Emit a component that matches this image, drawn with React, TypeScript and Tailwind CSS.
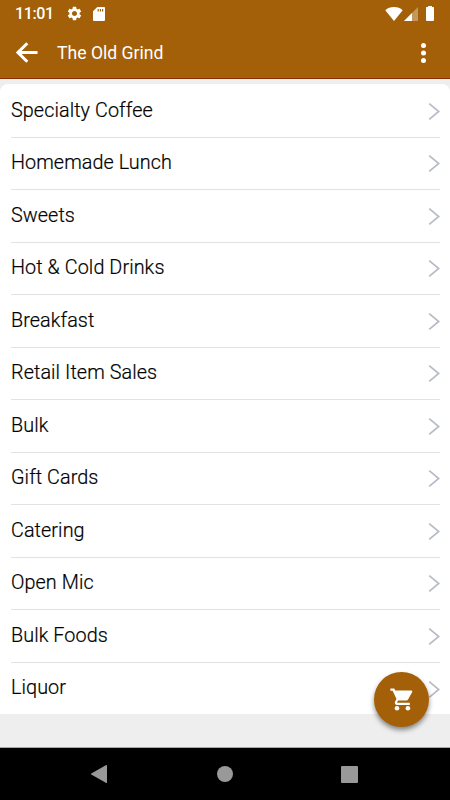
import React from 'react';
import { MdSettings } from 'react-icons/md';

const CATEGORIES = [
  'Specialty Coffee',
  'Homemade Lunch',
  'Sweets',
  'Hot & Cold Drinks',
  'Breakfast',
  'Retail Item Sales',
  'Bulk',
  'Gift Cards',
  'Catering',
  'Open Mic',
  'Bulk Foods',
  'Liquor',
];

const StatusBar: React.FC = () => (
  <div className="flex h-[27px] items-center pr-[16px] pl-[15px] text-white">
    <span className="w-[39px] pt-px text-[16px] leading-none font-medium tracking-[-0.35px]">11:01</span>
    <MdSettings className="ml-[12px] size-[17px]" />
    <svg className="ml-[9.5px] h-[14px] w-[12px]" viewBox="0 0 12 14">
      <path
        fill="currentColor"
        fillRule="evenodd"
        d="M4.300 0H11a1 1 0 0 1 1 1v12a1 1 0 0 1-1 1H1a1 1 0 0 1-1-1V4.300zM4.600 2v2.400h1.200V2zm2.200 0v2.400H8V2zM9 2v2.400h1.200V2z"
      />
    </svg>
    <svg className="ml-auto h-[14px] w-[18px]" viewBox="0 0 18 14">
      <path fill="currentColor" d="M.3 3.200C2.600 1 5.500 0 9 0s6.400 1 8.700 3.200L9 14z" />
    </svg>
    <svg className="ml-[1px] h-[14px] w-[14px]" viewBox="0 0 14 14">
      <path fill="currentColor" fillOpacity={0.35} d="M14 0v14H0z" />
      <path fill="currentColor" d="M8 6v8H0z" />
    </svg>
    <svg className="ml-[8px] h-[15px] w-[8px]" viewBox="0 0 8 15">
      <path fill="currentColor" d="M2 0h4v1h1.300a.7.7 0 0 1 .7.7V14a1 1 0 0 1-1 1H1a1 1 0 0 1-1-1V1.700A.7.7 0 0 1 .7 1H2z" />
    </svg>
  </div>
);

const Header: React.FC = () => (
  <header className="h-[79px] border-b border-[#8b2d00] bg-[#a36009]">
    <StatusBar />
    <div className="flex h-[51px] items-center pr-[24px] pl-[16px] text-white">
      <svg className="h-[21px] w-[22px]" viewBox="0 0 22 21" fill="none" stroke="currentColor" strokeWidth="3">
        <path d="M11.300 1.300L2 10.500l9.300 9.200M2 10.500h19.500" />
      </svg>
      <h1 className="ml-[19px] pt-[3px] text-[17.600px] leading-none">The Old Grind</h1>
      <svg className="ml-auto h-[20px] w-[5px]" viewBox="0 0 5 20" fill="currentColor">
        <circle cx="2.500" cy="2.500" r="2.500" />
        <circle cx="2.500" cy="10" r="2.500" />
        <circle cx="2.500" cy="17.500" r="2.500" />
      </svg>
    </div>
  </header>
);

const CategoryRow: React.FC<{ name: string; last: boolean }> = ({ name, last }) => (
  <li className="h-[52.5px] pr-[10px] pl-[11px]">
    <div className={`flex h-full items-center justify-between ${last ? '' : 'border-b border-[#e2e2e2]'}`}>
      <span className={`text-[19.800px] leading-none font-light tracking-[0.08px] [-webkit-text-stroke:0.2px_black] ${last ? 'pb-[3px]' : 'pb-[1px]'}`}>
        {name}
      </span>
      <svg className="h-[17px] w-[12px]" viewBox="0 0 12 17" fill="none">
        <path d="M1.200.7l9.500 7.800-9.500 7.800" stroke="#b7bbc7" strokeWidth="1.700" />
      </svg>
    </div>
  </li>
);

const NavBar: React.FC = () => (
  <nav className="flex h-[53px] items-center border-t border-[#a8a8a8] bg-black">
    <svg className="ml-[91px] h-[18px] w-[16px]" viewBox="0 0 16 18">
      <path fill="#999" d="M15.200.1a.6.6 0 0 1 .8.5v16.800a.6.6 0 0 1-.8.5L.3 9.500a.6.6 0 0 1 0-1z" />
    </svg>
    <div className="ml-[110px] size-[16px] rounded-full bg-[#999]" />
    <div className="ml-[108px] size-[17px] rounded-[1px] bg-[#999]" />
  </nav>
);

export default function App() {
  return (
    <div className="relative flex h-[800px] w-[450px] flex-col overflow-hidden bg-[#eeeeee] font-['Roboto',sans-serif] text-black">
      <Header />
      <main className="h-[668px] pt-[5.4px]">
        <ul className="h-[630px] rounded-t-lg bg-white pt-[1.1px]">
          {CATEGORIES.map((name, i) => (
            <CategoryRow key={name} name={name} last={i === CATEGORIES.length - 1} />
          ))}
        </ul>
      </main>
      <NavBar />

      {/* Floating cart button */}
      <button className="absolute top-[672px] left-[374px] flex size-[55px] items-center justify-center rounded-full bg-[#a36009] text-white shadow-[0_3px_5px_rgba(0,0,0,0.45)]">
        <svg className="h-[23px] w-[23px]" viewBox="0 0 23 23" fill="currentColor">
          <path d="M.4.400H4.200L5.300 2.600H21.300a1 1 0 0 1 .9 1.500l-4 7.200a2.200 2.200 0 0 1-1.900 1.200H8.100l-1 1.800a.3.3 0 0 0 .3.400H19.800V17H7a2.300 2.300 0 0 1-2-3.300l1.500-2.700L2.600 2.700H.4z" />
          <circle cx="7" cy="20.300" r="2.300" />
          <circle cx="17.900" cy="20.300" r="2.300" />
        </svg>
      </button>
    </div>
  );
}
